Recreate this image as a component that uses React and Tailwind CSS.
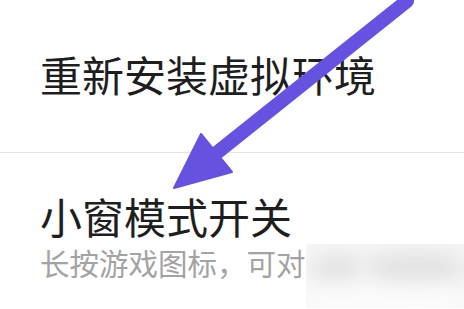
import React from "react";

const font = { fontFamily: '"Noto Sans CJK SC", "Noto Sans", sans-serif' };

const Arrow = () => (
  <svg
    className="absolute left-0 top-0 pointer-events-none"
    width="464"
    height="309"
    viewBox="0 0 464 309"
  >
    <line x1="407" y1="1" x2="214" y2="155" stroke="#6552e0" strokeWidth="14" strokeLinecap="round" />
    <polygon points="174,188 201,134 232,172" fill="#6552e0" stroke="#6552e0" strokeWidth="2" strokeLinejoin="round" />
  </svg>
);

// mosaic / blurred patch that hides the rest of the hint text
const Blur = () => (
  <div className="relative flex-1 self-stretch overflow-hidden bg-[#f7f7f7]">
    <div className="absolute left-[8px] top-[12px] h-[28px] w-[44px] rounded-full bg-[#dcdcdc] blur-md" />
    <div className="absolute left-[62px] top-[10px] h-[30px] w-[95px] rounded-full bg-[#dfdfdf] blur-md" />
    <div className="absolute left-0 top-[42px] h-[30px] w-full bg-white/70 blur-md" />
  </div>
);

export default function App() {
  return (
    <div className="relative h-[309px] w-[464px] overflow-hidden bg-white" style={font}>
      <div className="flex flex-col">
        <div className="pl-[40px] pt-[53px] text-[42px] leading-none text-[#1e1e1e]">
          重新安装虚拟环境
        </div>
        <div className="mt-[57px] h-px w-full bg-[#e3e3e3]" />
        <div className="mt-[42px] pl-[40px] text-[42px] leading-none text-[#1e1e1e]">
          小窗模式开关
        </div>
        <div className="mt-[7px] flex h-[64px] items-start">
          <div className="shrink-0 pl-[40px] pt-[4px] text-[29.5px] leading-none text-[#a3a3a3] whitespace-nowrap">
            长按游戏图标，可对
          </div>
          <Blur />
        </div>
      </div>
      <Arrow />
    </div>
  );
}
